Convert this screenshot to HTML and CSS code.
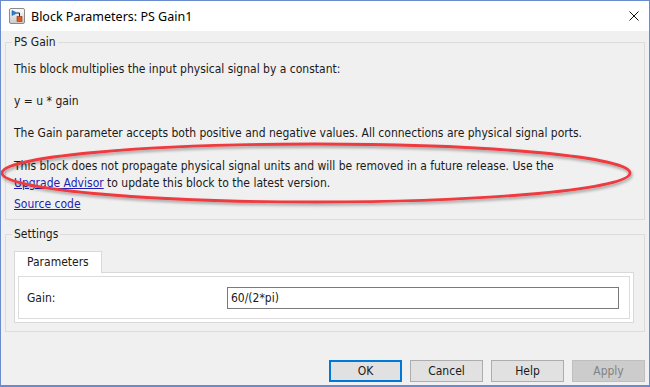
FILE: index.html
```html
<!DOCTYPE html>
<html lang="en">
<head>
    <meta charset="UTF-8">
    <title>Block Parameters: PS Gain1</title>
    <link rel="stylesheet" href="styles.css">
</head>
<body>
    <div class="window">
        <!-- title bar -->
        <div class="titlebar">
            <svg class="app-icon" width="16" height="16" viewBox="0 0 16 16">
                <defs>
                    <linearGradient id="iconBg" x1="0" y1="0" x2="0" y2="1">
                        <stop offset="0" stop-color="#fdfdfd"/>
                        <stop offset="1" stop-color="#c9c9c9"/>
                    </linearGradient>
                </defs>
                <rect x="0.5" y="0.5" width="15" height="15" rx="1.5" fill="url(#iconBg)" stroke="#8a8a8a"/>
                <polyline points="8,5 10.5,5 10.5,9" fill="none" stroke="#222" stroke-width="1"/>
                <polygon points="3,2.5 3,7.5 8,5" fill="#2a7fd4" stroke="#1c5ea8" stroke-width="0.6"/>
                <rect x="8" y="8.5" width="5" height="5" fill="#e2581e" stroke="#9a3410" stroke-width="0.6"/>
            </svg>
            <span class="title">Block Parameters: PS Gain1</span>
            <svg class="close-icon" width="10" height="10" viewBox="0 0 10 10">
                <path d="M0.5 0.5 L9.5 9.5 M9.5 0.5 L0.5 9.5" stroke="#111" stroke-width="1"/>
            </svg>
        </div>

        <div class="dialog-body">
            <!-- description -->
            <fieldset class="group">
                <legend>PS Gain</legend>
                <p>This block multiplies the input physical signal by a constant:</p>
                <p>y = u * gain</p>
                <p>The Gain parameter accepts both positive and negative values. All connections are physical signal ports.</p>
                <p class="warn">This block does not propagate physical signal units and will be removed in a future release. Use the<br><a href="#">Upgrade Advisor</a> to update this block to the latest version.</p>
                <a class="source" href="#">Source code</a>
            </fieldset>

            <!-- settings -->
            <fieldset class="group settings">
                <legend>Settings</legend>
                <div class="tabs">
                    <div class="tab">Parameters</div>
                </div>
                <div class="tab-pane">
                    <div class="param-box">
                        <label for="gain">Gain:</label>
                        <input id="gain" type="text" value="60/(2*pi)">
                    </div>
                </div>
            </fieldset>

            <!-- buttons -->
            <div class="buttons">
                <button class="btn default">OK</button>
                <button class="btn">Cancel</button>
                <button class="btn">Help</button>
                <button class="btn" disabled>Apply</button>
            </div>
        </div>

        <!-- red callout drawn over the dialog -->
        <svg class="callout" width="650" height="387" viewBox="0 0 650 387">
            <defs>
                <filter id="soft" x="-5%" y="-40%" width="110%" height="180%">
                    <feDropShadow dx="1" dy="2" stdDeviation="1.5" flood-color="#000" flood-opacity="0.35"/>
                </filter>
            </defs>
            <ellipse cx="316" cy="173" rx="314" ry="29" fill="none" stroke="#ee3b3f" stroke-width="2.8" filter="url(#soft)"/>
        </svg>
    </div>
</body>
</html>
```

FILE: styles.css
```css
/* page */
body {
    margin: 0;
    font-family: "DejaVu Sans Condensed", "DejaVu Sans", sans-serif;
    font-size: 12px;
    color: #1a1a1a;
}

/* window frame */
.window {
    position: relative;
    width: 650px;
    height: 387px;
    box-sizing: border-box;
    border: 1px solid #6a8ccf;
    border-bottom-width: 2px;
    display: flex;
    flex-direction: column;
    background: #f0f0f0;
    overflow: hidden;
}

/* title bar */
.titlebar {
    height: 30px;
    flex: none;
    background: #fff;
    display: flex;
    align-items: center;
    padding: 0 10px 0 8px;
}
.app-icon {
    flex: none;
}
.title {
    margin-left: 6px;
    font-family: "Noto Sans", sans-serif;
    font-size: 12.5px;
    color: #000;
}
.close-icon {
    margin-left: auto;
}

/* dialog body */
.dialog-body {
    flex: 1;
    display: flex;
    flex-direction: column;
    padding: 3px 4px 3px 4px;
}

/* group boxes */
.group {
    margin: 0;
    min-width: 0;
    border: 1px solid #dcdcdc;
    padding: 10px 8px 6px 8px;
}
.group legend {
    margin-left: -2px;
    padding: 0 2px;
    line-height: 17px;
}
.group p {
    margin: 0 0 15px;
    line-height: 17px;
}
.group p.warn {
    margin-top: 16px;
    margin-bottom: 4px;
}
a {
    color: #1f1fb0;
}
.source {
    display: inline-block;
    line-height: 17px;
}

/* settings group */
.settings {
    margin-top: 6px;
    padding: 8px 10px 8px 8px;
}
.tabs {
    display: flex;
}
.tab {
    border: 1px solid #d9d9d9;
    border-bottom: none;
    background: #fff;
    padding: 0 12px;
    line-height: 21px;
    margin-bottom: -1px;
    position: relative;
}
.tab-pane {
    border: 1px solid #d9d9d9;
    background: #fff;
    padding: 3px;
}
.param-box {
    border: 1px solid #dcdcdc;
    padding: 10px 10px 9px 8px;
    display: grid;
    grid-template-columns: 200px 1fr;
    align-items: center;
}
.param-box input {
    height: 22px;
    box-sizing: border-box;
    border: 1px solid #7a7a7a;
    padding: 0 3px;
    font: inherit;
    color: #1a1a1a;
    outline: none;
}

/* bottom buttons */
.buttons {
    margin-top: auto;
    display: flex;
    justify-content: flex-end;
    gap: 8px;
}
.btn {
    width: 73px;
    height: 22px;
    box-sizing: border-box;
    border: 1px solid #adadad;
    background: #e1e1e1;
    font: inherit;
    color: #1a1a1a;
    padding: 0;
}
.btn.default {
    border: 2px solid #0078d7;
}
.btn:disabled {
    background: #cccccc;
    border-color: #bfbfbf;
    color: #838383;
}

/* red markup ellipse */
.callout {
    position: absolute;
    left: -1px;
    top: -1px;
    pointer-events: none;
}
```
